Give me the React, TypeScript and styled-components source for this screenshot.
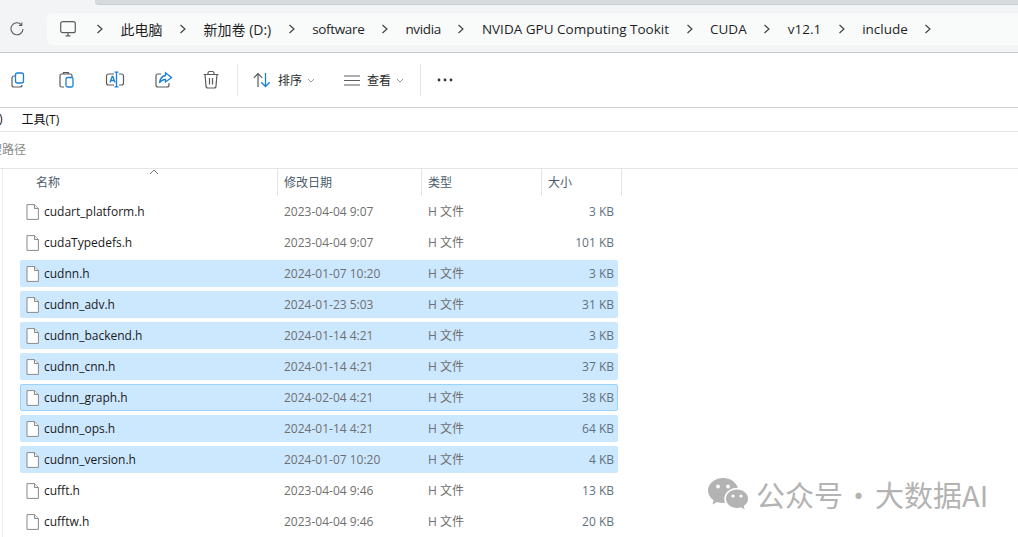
import React from "react";
import styled, { createGlobalStyle } from "styled-components";

const files = [
  { name: "cudart_platform.h", date: "2023-04-04 9:07", type: "H 文件", size: "3 KB" },
  { name: "cudaTypedefs.h", date: "2023-04-04 9:07", type: "H 文件", size: "101 KB" },
  { name: "cudnn.h", date: "2024-01-07 10:20", type: "H 文件", size: "3 KB", selected: true },
  { name: "cudnn_adv.h", date: "2024-01-23 5:03", type: "H 文件", size: "31 KB", selected: true },
  { name: "cudnn_backend.h", date: "2024-01-14 4:21", type: "H 文件", size: "3 KB", selected: true },
  { name: "cudnn_cnn.h", date: "2024-01-14 4:21", type: "H 文件", size: "37 KB", selected: true },
  { name: "cudnn_graph.h", date: "2024-02-04 4:21", type: "H 文件", size: "38 KB", selected: true, focused: true },
  { name: "cudnn_ops.h", date: "2024-01-14 4:21", type: "H 文件", size: "64 KB", selected: true },
  { name: "cudnn_version.h", date: "2024-01-07 10:20", type: "H 文件", size: "4 KB", selected: true },
  { name: "cufft.h", date: "2023-04-04 9:46", type: "H 文件", size: "13 KB" },
  { name: "cufftw.h", date: "2023-04-04 9:46", type: "H 文件", size: "20 KB" },
];

const crumbs = [
  { label: "此电脑", cjk: true },
  { label: "新加卷 (D:)", cjk: true },
  { label: "software", tight: true },
  { label: "nvidia", tight: true },
  { label: "NVIDA GPU Computing Tookit" },
  { label: "CUDA" },
  { label: "v12.1" },
  { label: "include" },
];

const Global = createGlobalStyle`
  html, body {
    margin: 0;
    height: 537px;
    overflow: hidden;
    background: #fff;
  }
  body {
    font-family: "Open Sans", "Noto Sans CJK SC", sans-serif;
  }
`;

const Page = styled.div`
  position: relative;
  width: 1018px;
  height: 537px;
  overflow: hidden;
  background: #fff;
`;

const TabStrip = styled.div`
  height: 5px;
  background: #f3f4f5;
  padding-left: 95px;
  &::before {
    content: "";
    display: block;
    height: 4px;
    background: #d7dadd;
    border-bottom: 1px solid #c9cdd0;
    border-bottom-left-radius: 4px;
  }
`;

const AddressBar = styled.div`
  height: 48px;
  box-sizing: border-box;
  padding: 8px 0 7px 0;
  background: #f3f4f5;
  border-bottom: 1px solid #c6c9cb;
  display: flex;
  align-items: center;
`;

const RefreshSlot = styled.div`
  width: 47px;
  padding-left: 10px;
  box-sizing: border-box;
  display: flex;
`;

const Pill = styled.div`
  flex: 1;
  height: 32px;
  background: #f9fbfb;
  border-radius: 5px 0 0 5px;
  display: flex;
  align-items: center;
  padding-left: 13px;
  font-size: 13.5px;
  color: #1f1f1f;
  white-space: nowrap;
`;

const PcIcon = styled.svg`
  margin-right: 20px;
`;

const Crumb = styled.span<{ $cjk?: boolean; $tight?: boolean }>`
  margin: 0 16.5px;
  font-size: ${(p) => (p.$cjk ? "14px" : "13.5px")};
  letter-spacing: ${(p) => (p.$tight ? "-0.35px" : "0")};
`;

const Toolbar = styled.div`
  height: 55px;
  box-sizing: border-box;
  border-bottom: 1px solid #cfcfcf;
  display: flex;
  align-items: center;
  padding-left: 8px;
`;

const ToolIcon = styled.div`
  width: 22px;
  height: 22px;
  margin-right: 26px;
  display: flex;
`;

const Divider = styled.div<{ $before: number; $after: number }>`
  width: 1px;
  height: 32px;
  background: #e6e6e6;
  margin: 0 ${(p) => p.$after}px 0 ${(p) => p.$before}px;
`;

const ToolLabel = styled.span`
  font-size: 12px;
  color: #2a2a2a;
  margin-left: 7px;
`;

const Caret = styled.svg`
  margin-left: 5px;
`;

const ToolGroup = styled.div<{ $gap: number }>`
  display: flex;
  align-items: center;
  margin-right: ${(p) => p.$gap}px;
`;

const MenuBar = styled.div`
  height: 24px;
  box-sizing: border-box;
  padding-bottom: 2px;
  border-bottom: 1px solid #e5e5e5;
  display: flex;
  align-items: center;
  font-size: 12px;
  color: #111;
`;

const MenuItem = styled.span<{ $x: number }>`
  margin-left: ${(p) => p.$x}px;
`;

const PathRow = styled.div`
  height: 37px;
  box-sizing: border-box;
  padding-bottom: 2px;
  border-bottom: 1px solid #e5e5e5;
  display: flex;
  align-items: center;
  font-size: 12px;
  color: #8a8a8a;
`;

const PathHint = styled.span`
  margin-left: -10px;
`;

const List = styled.div`
  margin-left: 2px;
  border-left: 1px solid #eeeeee;
  height: 369px;
  box-sizing: border-box;
`;

const Header = styled.div`
  position: relative;
  height: 27px;
  margin-bottom: 2px;
  display: grid;
  grid-template-columns: 275px 144px 120px 80px;
  font-size: 12px;
  color: #4c5c6b;
`;

const HeaderCell = styled.div<{ $pad: number }>`
  border-right: 1px solid #e5e5e5;
  padding: 0 0 2px ${(p) => p.$pad}px;
  display: flex;
  align-items: center;
`;

const SortArrow = styled.svg`
  position: absolute;
  left: 146px;
  top: 0;
`;

const Row = styled.div<{ $selected?: boolean; $focused?: boolean }>`
  width: 598px;
  height: 27px;
  box-sizing: border-box;
  margin: 0 0 4px 17px;
  border-radius: 2px;
  display: grid;
  grid-template-columns: 263px 144px 1fr auto;
  align-items: center;
  padding-right: 3px;
  font-size: 12px;
  background: ${(p) => (p.$selected ? "#cce8ff" : "transparent")};
  border: 1px solid ${(p) => (p.$focused ? "#99d1ff" : "transparent")};
`;

const NameCell = styled.div`
  display: flex;
  align-items: center;
  color: #1a1a1a;
  padding-left: 5px;
`;

const FileName = styled.span`
  margin-left: 5px;
`;

const GreyCell = styled.div`
  color: #6f6f6f;
`;

const TypeCell = styled(GreyCell)`
  padding-bottom: 2px;
`;

const SizeCell = styled.div`
  color: #5f7180;
  text-align: right;
`;

const Watermark = styled.div`
  position: absolute;
  left: 708px;
  top: 477px;
  display: flex;
  align-items: center;
  font-family: "Noto Sans CJK SC", sans-serif;
  font-size: 29px;
  line-height: 34px;
  color: #b3b3b3;
  white-space: nowrap;
`;

const WatermarkText = styled.span`
  margin-left: 8px;
`;

const WatermarkDot = styled.span`
  margin: 0 2px 0 1px;
`;

const Stroke = { fill: "none", stroke: "#5c5c5c", strokeWidth: 1.2 };
const Blue = { fill: "none", stroke: "#1b80d8", strokeWidth: 1.3 };

const Chevron = () => (
  <svg width="8" height="10" viewBox="0 0 8 10">
    <path d="M1.5 1 L6 5 L1.5 9" fill="none" stroke="#3a3a3a" strokeWidth="1.1" />
  </svg>
);

const FileIcon = () => (
  <svg width="13" height="16" viewBox="0 0 13 16">
    <path d="M1 .6 H8.6 L12.4 4.4 V15.4 H1 Z" fill="#fff" stroke="#8a8a8a" strokeWidth="1" />
    <path d="M8.5 .6 V4.5 H12.4" fill="#f0f0f0" stroke="#8a8a8a" strokeWidth="1" />
  </svg>
);

const CaretIcon = () => (
  <Caret width="8" height="5" viewBox="0 0 8 5">
    <path d="M1 1 L4 4 L7 1" fill="none" stroke="#9a9a9a" strokeWidth="1" />
  </Caret>
);

export default function App() {
  return (
    <Page>
      <Global />
      <TabStrip />
      <AddressBar>
        <RefreshSlot>
          <svg width="14" height="14" viewBox="0 0 14 14">
            <path d="M11.5 2.8 A6 6 0 1 0 13 7" fill="none" stroke="#5c5c5c" strokeWidth="1.1" />
            <path d="M11.8 .6 V3.4 H9" fill="none" stroke="#5c5c5c" strokeWidth="1.1" />
          </svg>
        </RefreshSlot>
        <Pill>
          <PcIcon width="16" height="16" viewBox="0 0 16 16">
            <rect x=".7" y=".7" width="14.6" height="11" rx="2" fill="none" stroke="#5c5c5c" strokeWidth="1.2" />
            <path d="M5.5 14.8 H10.5 M8 12 V14.8" fill="none" stroke="#5c5c5c" strokeWidth="1.2" />
          </PcIcon>
          <Chevron />
          {crumbs.map((c) => (
            <React.Fragment key={c.label}>
              <Crumb $cjk={c.cjk} $tight={c.tight}>{c.label}</Crumb>
              <Chevron />
            </React.Fragment>
          ))}
        </Pill>
      </AddressBar>
      <Toolbar>
        <ToolIcon>
          <svg width="22" height="22" viewBox="0 0 22 22">
            <path d="M7 7 H6 A2 2 0 0 0 4 9 V16 A2 2 0 0 0 6 18 H12 A2 2 0 0 0 14 16" {...Stroke} />
            <rect x="7.5" y="4" width="8" height="10" rx="2" {...Blue} />
          </svg>
        </ToolIcon>
        <ToolIcon>
          <svg width="22" height="22" viewBox="0 0 22 22">
            <path d="M8 18 H5.5 A1.5 1.5 0 0 1 4 16.5 V6.5 A1.5 1.5 0 0 1 5.5 5 H14.5 A1.5 1.5 0 0 1 16 6.5 V8" {...Stroke} />
            <path d="M7.5 5 V3.6 H12.5 V5" {...Stroke} />
            <rect x="10" y="8.5" width="7" height="9.5" rx="1.5" {...Blue} />
          </svg>
        </ToolIcon>
        <ToolIcon>
          <svg width="22" height="22" viewBox="0 0 22 22">
            <path d="M10 5 H4.5 A2 2 0 0 0 2.5 7 V14 A2 2 0 0 0 4.5 16 H10 M15 5 H17.5 A2 2 0 0 1 19.5 7 V14 A2 2 0 0 1 17.5 16 H15" {...Stroke} />
            <path d="M12.5 3.5 V17.5 M10.5 3.2 H14.5 M10.5 17.8 H14.5 M6 13.5 L8.2 7.5 H8.8 L11 13.5 M6.8 11.5 H10.2" {...Blue} />
          </svg>
        </ToolIcon>
        <ToolIcon>
          <svg width="22" height="22" viewBox="0 0 22 22">
            <path d="M9 5 H6 A2 2 0 0 0 4 7 V16 A2 2 0 0 0 6 18 H15 A2 2 0 0 0 17 16 V14" {...Stroke} />
            <path d="M13.5 3.8 L19.5 8.5 L13.5 13 V10.5 C11 10.5 9 11.5 7.5 14 C8 9.5 10.5 7 13.5 6.5 Z" {...Blue} />
          </svg>
        </ToolIcon>
        <ToolIcon>
          <svg width="22" height="22" viewBox="0 0 22 22">
            <path d="M3.5 5.5 H18.5 M8 5.5 V4 A1.5 1.5 0 0 1 9.5 2.5 H12.5 A1.5 1.5 0 0 1 14 4 V5.5 M5 5.5 L6 17 A2 2 0 0 0 8 19 H14 A2 2 0 0 0 16 17 L17 5.5 M9.5 9 V15.5 M12.5 9 V15.5" {...Stroke} />
          </svg>
        </ToolIcon>
        <Divider $before={-11} $after={15} />
        <ToolGroup $gap={29}>
          <svg width="18" height="16" viewBox="0 0 18 16">
            <path d="M5 15 V1.5 M.8 5.8 L5 1.5 L9.2 5.8" {...Stroke} />
            <path d="M12.5 1 V14.5 M8.3 10.2 L12.5 14.5 L16.7 10.2" {...Blue} />
          </svg>
          <ToolLabel>排序</ToolLabel>
          <CaretIcon />
        </ToolGroup>
        <ToolGroup $gap={16}>
          <svg width="16" height="11" viewBox="0 0 16 11">
            <path d="M0 1 H16 M0 5.5 H16 M0 10 H16" fill="none" stroke="#5c5c5c" strokeWidth="1" />
          </svg>
          <ToolLabel>查看</ToolLabel>
          <CaretIcon />
        </ToolGroup>
        <Divider $before={0} $after={16} />
        <svg width="16" height="4" viewBox="0 0 16 4">
          <circle cx="2" cy="2" r="1.4" fill="#333" />
          <circle cx="8" cy="2" r="1.4" fill="#333" />
          <circle cx="14" cy="2" r="1.4" fill="#333" />
        </svg>
      </Toolbar>
      <MenuBar>
        <MenuItem $x={-1}>)</MenuItem>
        <MenuItem $x={19}>工具(T)</MenuItem>
      </MenuBar>
      <PathRow>
        <PathHint>搜路径</PathHint>
      </PathRow>
      <List>
        <Header>
          <HeaderCell $pad={33}>名称</HeaderCell>
          <HeaderCell $pad={6}>修改日期</HeaderCell>
          <HeaderCell $pad={6}>类型</HeaderCell>
          <HeaderCell $pad={6}>大小</HeaderCell>
          <SortArrow width="10" height="6" viewBox="0 0 10 6">
            <path d="M1 5 L5 1 L9 5" fill="none" stroke="#777" strokeWidth="1" />
          </SortArrow>
        </Header>
        {files.map((f) => (
          <Row key={f.name} $selected={f.selected} $focused={f.focused}>
            <NameCell>
              <FileIcon />
              <FileName>{f.name}</FileName>
            </NameCell>
            <GreyCell>{f.date}</GreyCell>
            <TypeCell>{f.type}</TypeCell>
            <SizeCell>{f.size}</SizeCell>
          </Row>
        ))}
      </List>
      <Watermark>
        <svg width="40" height="32" viewBox="0 0 40 32">
          <path d="M15 0 C6.7 0 0 5.6 0 12.5 C0 16.5 2.2 19.9 5.6 22.2 L4.4 26.4 L9.2 23.9 C11 24.6 13 25 15 25 C15.7 25 16.4 25 17 24.9 C16.5 23.6 16.3 22.3 16.3 20.9 C16.3 14.7 22.2 9.8 29.3 9.8 L29.9 9.8 C28.3 4.2 22.2 0 15 0 Z" fill="#b3b3b3" />
          <path d="M29 11.5 C22.9 11.5 18 15.6 18 20.7 C18 25.8 22.9 29.9 29 29.9 C30.4 29.9 31.7 29.7 32.9 29.3 L36.7 31.4 L35.7 28 C38.3 26.3 40 23.7 40 20.7 C40 15.6 35.1 11.5 29 11.5 Z" fill="#b3b3b3" />
          <circle cx="10" cy="8.5" r="1.9" fill="#fff" />
          <circle cx="20" cy="8.5" r="1.9" fill="#fff" />
          <circle cx="25" cy="18" r="1.6" fill="#fff" />
          <circle cx="33" cy="18" r="1.6" fill="#fff" />
        </svg>
        <WatermarkText>公众号</WatermarkText>
        <WatermarkDot>·</WatermarkDot>
        <span>大数据AI</span>
      </Watermark>
    </Page>
  );
}
